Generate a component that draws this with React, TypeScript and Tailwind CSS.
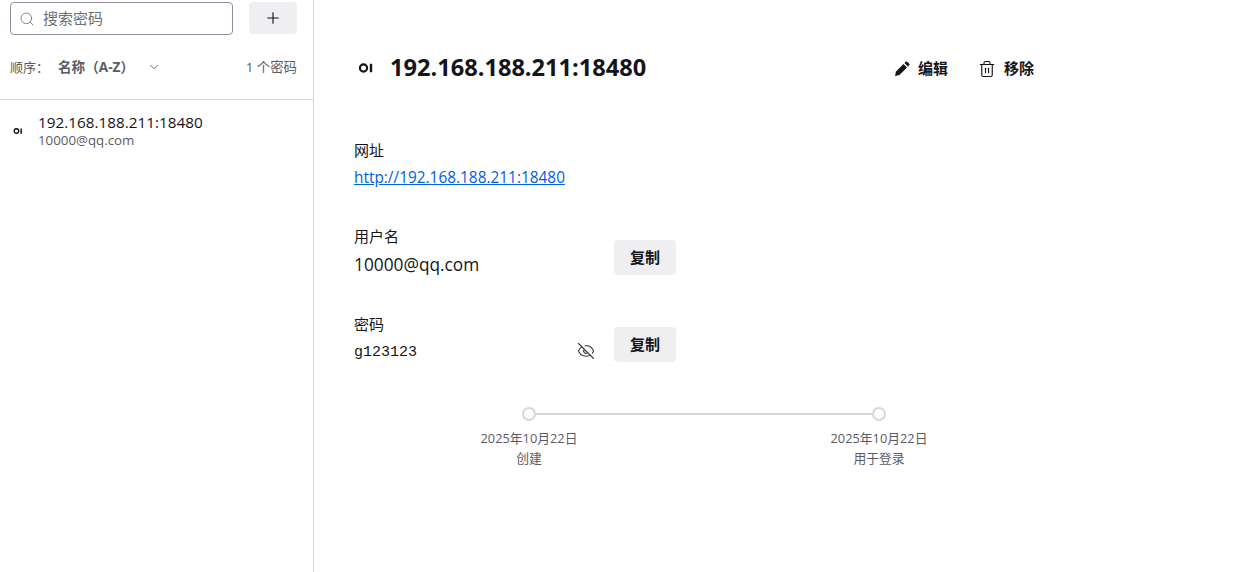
import { Plus, Search, ChevronDown, Trash2, EyeOff } from 'lucide-react';

const FONT = '"Open Sans","Noto Sans CJK SC",sans-serif';

function SiteIcon({ large }: { large?: boolean }) {
  return (
    <svg width={large ? 16 : 10} height={large ? 16 : 10} viewBox="0 0 16 16" fill="none" stroke="#15141a">
      <circle cx="5.5" cy="8" r="3.6" strokeWidth="2.2" />
      <path d="M13 3.8v8.4" strokeWidth="2.4" />
    </svg>
  );
}

function EditIcon() {
  return (
    <svg width="16" height="16" viewBox="0 0 16 16" fill="#15141a">
      <path d="M1 15l1-4.5L9.5 3 13 6.5 5.5 14z" />
      <path d="M10.5 2l1-1a1.4 1.4 0 0 1 2 0L15 2.5a1.4 1.4 0 0 1 0 2l-1 1z" />
    </svg>
  );
}

function Sidebar() {
  return (
    <aside className="flex h-full w-[314px] shrink-0 flex-col border-r border-[#d7d7db]">
      <div className="flex items-start pl-[10px] pr-4 pt-[2px]">
        <div className="flex h-[33px] w-[223px] items-center rounded border border-[#8f8f9d] pl-2">
          <Search size={16} strokeWidth={1.25} className="text-[#6f6f78]" />
          <span className="ml-[8px] text-[15px] text-[#6d6d75]">搜索密码</span>
        </div>
        <button className="ml-4 flex h-8 w-12 items-center justify-center rounded bg-[#efeff1] text-[#15141a]">
          <Plus size={18} strokeWidth={1.5} />
        </button>
      </div>
      <div className="flex items-center pl-[10px] pr-4 pt-[22px] text-[13px] leading-5 text-[#5b5b66]">
        <span>顺序：</span>
        <span className="ml-[9px] text-[13.6px] font-bold">名称（A-Z）</span>
        <ChevronDown size={14} strokeWidth={1.5} className="ml-[13px]" />
        <span className="ml-auto text-[13.4px]">1 个密码</span>
      </div>
      <div className="mt-[22px] flex items-center border-t border-[#d7d7db] pl-[13px] pt-[13px]">
        <SiteIcon />
        <div className="ml-[15px]">
          <div className="text-[15.3px] leading-[18px] text-[#15141a]">192.168.188.211:18480</div>
          <div className="text-[13.3px] leading-[18px] text-[#5b5b66]">10000@qq.com</div>
        </div>
      </div>
    </aside>
  );
}

function CopyButton() {
  return (
    <button className="flex h-[35px] w-[62px] items-center justify-center rounded bg-[#efeff1] text-[15px] font-bold text-[#15141a]">
      复制
    </button>
  );
}

function TimelineItem({ date, label }: { date: string; label: string }) {
  return (
    <div className="w-[120px] text-center text-[12.8px] leading-5 text-[#5b5b66]">
      <div>{date}</div>
      <div>{label}</div>
    </div>
  );
}

export default function App() {
  return (
    <div className="flex h-[572px] w-[1252px] overflow-hidden bg-white" style={{ fontFamily: FONT }}>
      <Sidebar />
      <main className="flex-1 pl-10">
        <header className="mt-[50px] flex h-[35px] w-[680px] items-center">
          <div className="ml-[4px]"><SiteIcon large /></div>
          <h1 className="ml-[16px] text-[23.6px] font-bold text-[#15141a]">192.168.188.211:18480</h1>
          <div className="ml-auto mt-[2px] flex items-center text-[15px] font-bold text-[#15141a]">
            <EditIcon />
            <span className="ml-2">编辑</span>
            <Trash2 size={18} strokeWidth={1.5} className="ml-[30px]" />
            <span className="ml-2">移除</span>
          </div>
        </header>
        <section className="mt-[55px]">
          <div className="text-[15px] leading-5 text-[#15141a]">网址</div>
          <a className="mt-[8px] block text-[15.4px] leading-5 text-[#0060df] underline">http://192.168.188.211:18480</a>
        </section>
        <section className="mt-[38px] flex w-[322px] items-start justify-between">
          <div>
            <div className="text-[15px] leading-5 text-[#15141a]">用户名</div>
            <div className="mt-[7px] text-[17.3px] leading-6 text-[#15141a]">10000@qq.com</div>
          </div>
          <div className="mt-[14px]"><CopyButton /></div>
        </section>
        <section className="mt-[37px] flex w-[322px] items-start justify-between">
          <div>
            <div className="text-[15px] leading-5 text-[#15141a]">密码</div>
            <div className="mt-[7px] flex w-[241px] items-start justify-between">
              <span className="mt-[2px] text-[15px] leading-5 text-[#15141a]" style={{ fontFamily: '"Liberation Mono",monospace' }}>g123123</span>
              <EyeOff size={18} strokeWidth={1.5} className="mt-[1px] text-[#3a3a42]" />
            </div>
          </div>
          <div className="mt-[13px]"><CopyButton /></div>
        </section>
        <section className="ml-[115px] mt-[44px] w-[470px]">
          <div className="flex items-center px-[53px]">
            <span className="h-[14px] w-[14px] rounded-full border-2 border-[#d7d7db]" />
            <span className="h-[2px] flex-1 bg-[#d7d7db]" />
            <span className="h-[14px] w-[14px] rounded-full border-2 border-[#d7d7db]" />
          </div>
          <div className="mt-[7px] flex w-[470px] gap-[230px]">
            <TimelineItem date="2025年10月22日" label="创建" />
            <TimelineItem date="2025年10月22日" label="用于登录" />
          </div>
        </section>
      </main>
    </div>
  );
}
